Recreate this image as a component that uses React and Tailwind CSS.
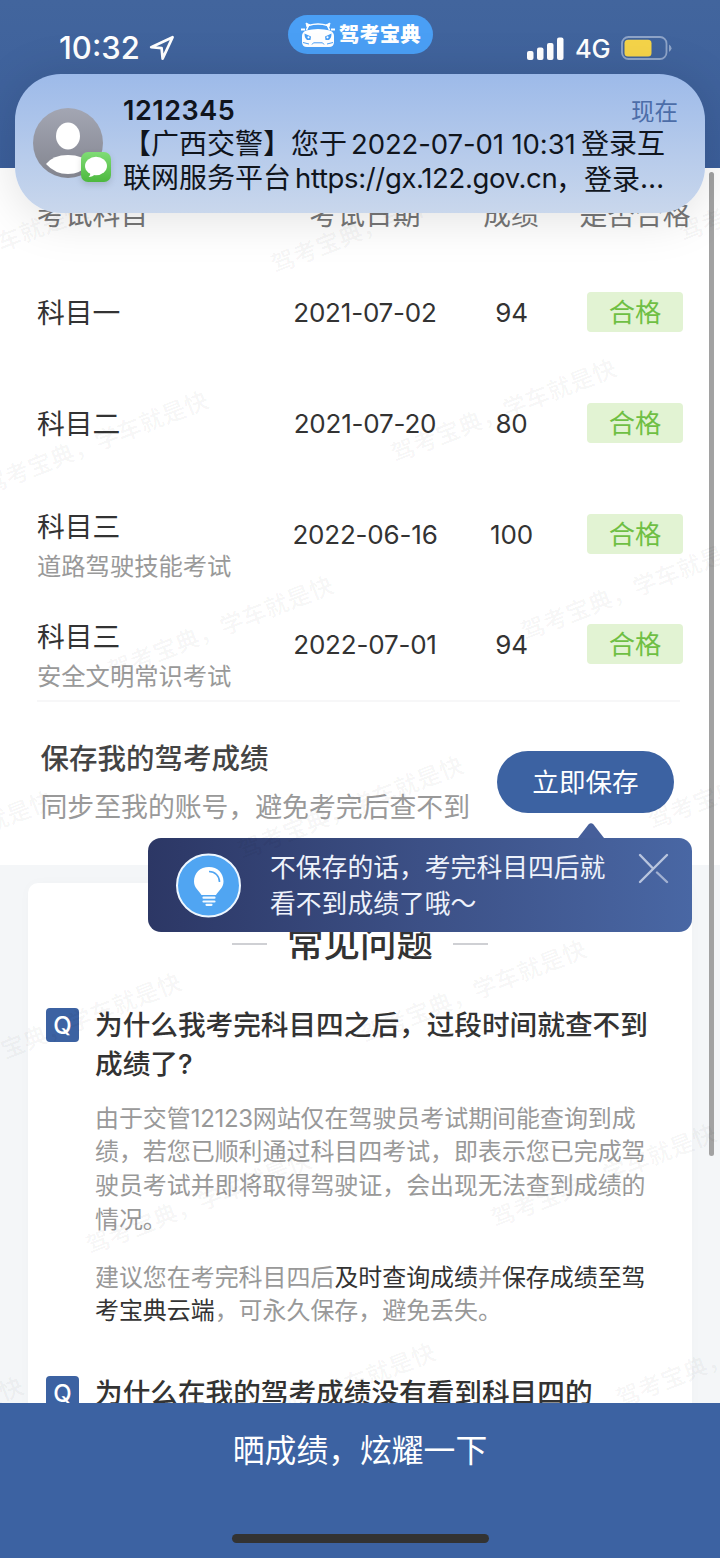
const scores = [
    { name: "科目一", date: "2021-07-02", score: "94" },
    { name: "科目二", date: "2021-07-20", score: "80" },
    { name: "科目三", sub: "道路驾驶技能考试", date: "2022-06-16", score: "100" },
    { name: "科目三", sub: "安全文明常识考试", date: "2022-07-01", score: "94" },
];

// centre points of the repeated watermark
const marks = [
    [-24, 253], [384, 222], [792, 190],
    [96, 443], [504, 411],
    [221, 628], [634, 589],
    [-59, 843], [351, 808], [761, 778],
    [69, 1025], [474, 992],
    [199, 1203], [604, 1176],
    [-89, 1429], [323, 1395], [729, 1356],
];

function CarLogo() {
    return (
        <svg width="36" height="26" viewBox="0 0 36 26" fill="none">
            <path d="M6.500 8 L8.500 3.500 Q18 0.500 27.500 3.500 L29.500 8" stroke="#fff" strokeWidth="1.6" />
            <path d="M6 1 L7 5 L10 3Z M30 1 L29 5 L26 3Z" fill="#fff" stroke="#fff" strokeWidth="1" />
            <path d="M1 7.500h4M31 7.500h4" stroke="#fff" strokeWidth="1.8" />
            <path d="M6 8.500 Q18 5.500 30 8.500 Q34 10 34 14 V20 Q34 25 29 25 H7 Q2 25 2 20 V14 Q2 10 6 8.500Z" fill="#fff" />
            <path d="M4.500 11.500 L11 14.500 L10.500 18 H7 Q4.500 16 4.500 11.500Z M31.500 11.500 L25 14.500 L25.500 18 H29 Q31.500 16 31.500 11.500Z" fill="#4a9ff5" />
            <path d="M12 22.500 L13.500 20.800 H22.500 L24 22.500 M3 20.500l6 1.500M33 20.500l-6 1.500" stroke="#4a9ff5" strokeWidth="1" />
            <circle cx="8.500" cy="15.300" r="1.100" fill="#fff" />
            <circle cx="27.500" cy="15.300" r="1.100" fill="#fff" />
        </svg>
    );
}

function StatusBar() {
    return (
        <header className="flex h-[168px] shrink-0 items-start bg-linear-to-b from-[#42659d] to-[#3c5f9b] pl-[59px] pr-[48px] text-white">
            <div className="mt-[29px] flex w-[229px] items-center">
                <span className="w-[90px] text-[31px] leading-[38px] font-medium">10:32</span>
                <svg width="26" height="26" viewBox="0 0 26 26" fill="none">
                    <path d="M23.6 2.2 L2.2 12.2 L12.6 13.2 L13.6 23.6 Z" stroke="#fff" strokeWidth="2.7" strokeLinejoin="round" />
                </svg>
            </div>
            <div className="mt-[15px] flex h-[39px] w-[145px] items-center gap-[3px] rounded-full bg-[#4a9ff5] pl-[12px]">
                <CarLogo />
                <span className="text-[20.4px] leading-[38px] font-black whitespace-nowrap">驾考宝典</span>
            </div>
            <div className="mt-[35px] ml-auto flex w-[145px] items-center">
                <svg width="37" height="24" viewBox="0 0 37 24" fill="#fff">
                    <rect x="0" y="14" width="6.5" height="9" rx="2" />
                    <rect x="10" y="10.5" width="6.5" height="12.5" rx="2" />
                    <rect x="20" y="6" width="6.5" height="17" rx="2" />
                    <rect x="30" y="0.5" width="6.5" height="22.5" rx="2" />
                </svg>
                <span className="ml-[11px] w-[46px] text-[25.5px] leading-[27px] font-medium tracking-[-0.3px]">4G</span>
                <svg width="51" height="25" viewBox="0 0 51 25" fill="none">
                    <rect x="1" y="1" width="44.5" height="22" rx="6.5" stroke="#8ea4c8" strokeWidth="1.8" />
                    <rect x="3.5" y="3.8" width="27" height="16.8" rx="3.5" fill="#f5d449" />
                    <path d="M48 8.5 Q50.5 10 50.5 12.3 Q50.5 14.6 48 16Z" fill="#8ea4c8" />
                </svg>
            </div>
        </header>
    );
}

function Notification() {
    return (
        <div className="absolute top-[74px] left-[15px] flex h-[139px] w-[690px] rounded-[46px] bg-linear-to-b from-[#9dbae9] to-[#c9d7ec] pl-[18px] text-[#10151d] shadow-[0_4px_50px_rgba(0,0,0,0.13)]">
            <div className="relative mt-[34px] h-[80px] w-[90px] shrink-0">
                <svg width="70" height="70" viewBox="0 0 70 70">
                    <defs>
                        <linearGradient id="avatar" x1="0" y1="0" x2="0" y2="1">
                            <stop offset="0" stopColor="#a3a6b3" />
                            <stop offset="1" stopColor="#83858f" />
                        </linearGradient>
                    </defs>
                    <circle cx="35" cy="35" r="35" fill="url(#avatar)" />
                    <ellipse cx="35" cy="28" rx="12" ry="13.5" fill="#fff" />
                    <path d="M13 56 Q20 47 35 47 Q50 47 57 56 Q47 66 35 66 Q22 66 13 56Z" fill="#fff" />
                </svg>
                <svg className="absolute top-[44px] left-[48px] drop-shadow-md" width="30" height="30" viewBox="0 0 30 30">
                    <defs>
                        <linearGradient id="msg" x1="0" y1="0" x2="0" y2="1">
                            <stop offset="0" stopColor="#7fdc75" />
                            <stop offset="1" stopColor="#4db83f" />
                        </linearGradient>
                    </defs>
                    <rect width="30" height="30" rx="7" fill="url(#msg)" />
                    <ellipse cx="15" cy="14" rx="11" ry="9.2" fill="#fff" />
                    <path d="M9 20 Q10 23 7.5 25 Q12 24.8 14 22Z" fill="#fff" />
                </svg>
            </div>
            <div className="mt-[21px] w-[560px]">
                <div className="flex h-[33px] w-[555px] items-center justify-between">
                    <span className="text-[27px] font-semibold tracking-[0.5px]">1212345</span>
                    <span className="text-[23.5px] text-[#4c6da8]">现在</span>
                </div>
                <p className="flex h-[33px] items-center text-[28px] leading-[33px] whitespace-nowrap">
                    <span>【广西交警】您于</span>
                    <span className="ml-[4px] w-[230px] text-[27.5px] tracking-[-0.1px]">2022-07-01 10:31</span>
                    <span>登录互</span>
                </p>
                <p className="flex h-[33px] items-center pt-px text-[28px] leading-[33px] whitespace-nowrap">
                    <span>联网服务平台</span>
                    <span className="ml-[4px] w-[261px] text-[27.5px] tracking-[-0.350px]">https://gx.122.gov.cn</span>
                    <span className="font-['Noto_Sans_CJK_SC']">，登录</span>
                    <span className="tracking-[1px]">…</span>
                </p>
            </div>
        </div>
    );
}

function ScoreTable() {
    return (
        <div className="mx-[37px] text-[27.8px] text-[#333]">
            <div className="grid h-[89px] grid-cols-[248px_160px_132px_116px] pt-[27px] text-center leading-[40px] text-[#777]">
                <span className="text-left">考试科目</span>
                <span>考试日期</span>
                <span>成绩</span>
                <span>是否合格</span>
            </div>
            {scores.map((s, i) => (
                <div key={i} className="grid h-[110.8px] grid-cols-[248px_160px_132px_116px] pt-[35px] text-center leading-[42px]">
                    <div className={s.sub ? "-mt-[8px] text-left" : "text-left"}>
                        <p>{s.name}</p>
                        {s.sub && <p className="text-[24.3px] leading-[37px] text-[#999]">{s.sub}</p>}
                    </div>
                    <span className="text-[26px] tracking-[-0.2px] whitespace-nowrap">{s.date}</span>
                    <span className="pl-px text-[26px] tracking-[-0.2px]">{s.score}</span>
                    <span className="mx-auto h-[40px] w-[96px] rounded-[4px] bg-[#e2f3d3] text-[26.3px] text-[#6fbf44]">合格</span>
                </div>
            ))}
            <div className="h-[2px] w-[643px] bg-[#f7f7f8]" />
        </div>
    );
}

function SaveTip() {
    return (
        <div className="absolute top-[838px] left-[148px] flex h-[94px] w-[544px] rounded-[13px] bg-linear-to-r from-[#2c3765] via-[#3c5086] to-[#4967a4] pl-[27px] text-[#eef2fb]">
            <svg className="absolute -top-[15px] left-[430px]" width="26" height="15" viewBox="0 0 26 15">
                <path d="M0 15 L10.5 1.6 Q13 -1.2 15.5 1.6 L26 15Z" fill="#465f9a" />
            </svg>
            <svg className="mt-[15px] shrink-0" width="67" height="66" viewBox="0 0 67 66">
                <ellipse cx="33.5" cy="32.5" rx="31.5" ry="31" fill="#50a5f2" stroke="#eef7ff" strokeWidth="2" />
                <path d="M34 14 C25 14 19 20 19 28.5 C19 35 24 37.500 26.500 42 H41 C43.500 37.500 48.500 35 48.500 28.500 C48.500 20 42.500 14 34 14Z" fill="#fff" />
                <path d="M34 18.500 C40 18.500 44.500 23 44.500 29" stroke="#50a5f2" strokeWidth="1.6" fill="none" />
                <path d="M28.500 44.700h11M28.500 48.500h11M31.500 51.800h5" stroke="#f3faff" strokeWidth="2.2" strokeLinecap="round" />
            </svg>
            <p className="mt-[12px] ml-[28px] w-[345px] text-[25.8px] leading-[36px] whitespace-nowrap">
                不保存的话，考完科目四后就<br />看不到成绩了哦～
            </p>
            <svg className="mt-[15px] ml-[23px] shrink-0" width="31" height="31" viewBox="0 0 31 31" stroke="#b9c5de" strokeWidth="2.4" strokeLinecap="round">
                <path d="M2 2 L15 15.500 M29 2 L2 29" />
                <path d="M19 19.500 L29 29" opacity="0.8" />
            </svg>
        </div>
    );
}

function Question({ children }) {
    return (
        <div className="flex">
            <span className="mt-[2px] h-[34px] w-[33px] shrink-0 rounded-[4px] bg-[#3c62a2] text-center text-[24px] leading-[35px] font-medium text-white">Q</span>
            <h3 className="ml-[16px] text-[27.65px] leading-[38.8px] font-medium whitespace-nowrap text-[#333]">{children}</h3>
        </div>
    );
}

function Faq() {
    return (
        <section className="flex-1 bg-[#f4f6f8] px-[28px] pt-[18px]">
            <div className="h-[560px] rounded-t-[10px] bg-white pt-[36px] pl-[18px] shadow-[0_0_14px_rgba(0,0,0,0.02)]">
                <div className="flex h-[50px] w-[628px] items-center justify-center gap-[20px]">
                    <i className="h-[2px] w-[35px] bg-[#cfd0d4]" />
                    <h2 className="text-[36.5px] leading-[50px] font-medium text-[#333]">常见问题</h2>
                    <i className="h-[2px] w-[35px] bg-[#cfd0d4]" />
                </div>
                <div className="mt-[37px]">
                    <Question>为什么我考完科目四之后，过段时间就查不到<br />成绩了?</Question>
                    <div className="ml-[49px] text-[23.95px] leading-[33.7px] whitespace-nowrap text-[#999]">
                        <p className="mt-[18px]">
                            由于交管<span className="tracking-[-0.3px]">12123</span>网站仅在驾驶员考试期间能查询到成<br />
                            绩，若您已顺利通过科目四考试，即表示您已完成驾<br />
                            驶员考试并即将取得驾驶证，会出现无法查到成绩的<br />
                            情况。
                        </p>
                        <p className="mt-[24px]">
                            建议您在考完科目四后<span className="text-[#333]">及时查询成绩</span>并<span className="text-[#333]">保存成绩至驾<br />考宝典云端</span>，可永久保存，避免丢失。
                        </p>
                    </div>
                    <div className="mt-[46px]">
                        <Question>为什么在我的驾考成绩没有看到科目四的</Question>
                    </div>
                </div>
            </div>
        </section>
    );
}

export default function App() {
    return (
        <div className="relative flex h-[1558px] w-[720px] flex-col overflow-hidden bg-white font-['Inter','Noto_Sans_CJK_SC',sans-serif]">
            <StatusBar />

            <main className="flex h-[1235px] shrink-0 flex-col overflow-hidden">
                <ScoreTable />
                <section className="flex h-[163px] shrink-0 justify-between pr-[46px] pl-[40.5px]">
                    <div className="pt-[37px] whitespace-nowrap">
                        <h3 className="text-[28.5px] leading-[40px] font-medium text-[#444]">保存我的驾考成绩</h3>
                        <p className="mt-[8px] text-[26.85px] leading-[40px] text-[#999]">同步至我的账号，避免考完后查不到</p>
                    </div>
                    <button className="mt-[49px] h-[62px] w-[177px] rounded-full bg-[#3c62a2] pt-[2px] text-[26.6px] text-white">立即保存</button>
                </section>
                <Faq />
            </main>

            <SaveTip />

            <div className="absolute top-[172px] left-[709px] h-[984px] w-[5px] rounded-full bg-[#a2a2a2]" />

            <div className="pointer-events-none absolute top-0 left-0 h-[1403px] w-[720px] overflow-hidden">
                {marks.map(([x, y]) => (
                    <span
                        key={x + "-" + y}
                        className="absolute w-[260px] -translate-x-1/2 -translate-y-1/2 -rotate-[21.5deg] text-center text-[23.5px] leading-[30px] font-medium tracking-[0.5px] whitespace-nowrap text-black/5"
                        style={{ left: x, top: y }}
                    >
                        驾考宝典，学车就是快
                    </span>
                ))}
            </div>

            <Notification />

            <footer className="flex flex-1 flex-col items-center bg-[#3c62a2] pt-[25px] text-white">
                <span className="text-[31.8px] leading-[46px]">晒成绩，炫耀一下</span>
                <div className="mt-[60px] h-[9px] w-[257px] rounded-full bg-[#333]" />
            </footer>
        </div>
    );
}
